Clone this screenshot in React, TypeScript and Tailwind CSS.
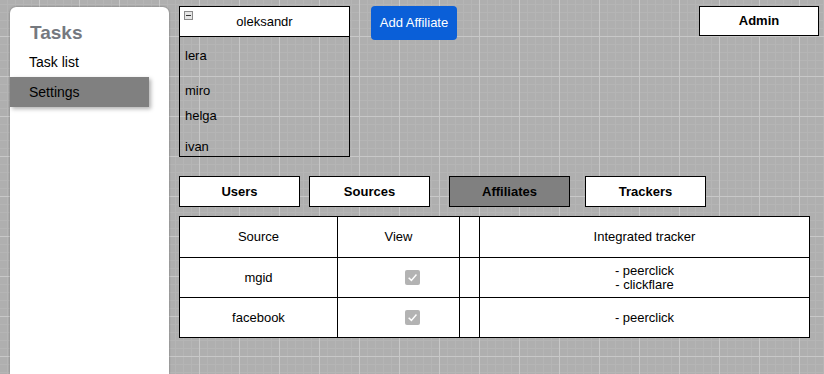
import React from 'react';

const users = [
  { name: 'lera', cls: 'h-[36px] pt-[11px]' },
  { name: 'miro', cls: 'h-[26px] pt-[10px]' },
  { name: 'helga', cls: 'h-[30px] pt-[9px]' },
  { name: 'ivan', cls: 'h-[26px] pt-[10px]' },
];

const tabs = [
  { label: 'Users', cls: 'ml-0', active: false },
  { label: 'Sources', cls: 'ml-[9px]', active: false },
  { label: 'Affiliates', cls: 'ml-[19px]', active: true },
  { label: 'Trackers', cls: 'ml-[15px]', active: false },
];

const rows = [
  { source: 'mgid', trackers: ['peerclick', 'clickflare'] },
  { source: 'facebook', trackers: ['peerclick'] },
];

const Check: React.FC = () => (
  <span className="inline-flex w-[15px] h-[15px] rounded-[2px] bg-[#b3b3b3] items-center justify-center">
    <svg width="11" height="11" viewBox="0 0 10 10">
      <path d="M1.5 5.2 L4 7.6 L8.6 2.2" stroke="#fff" strokeWidth="1.3" fill="none" />
    </svg>
  </span>
);

const App: React.FC = () => {
  return (
    <div
      className="w-full h-[374px] overflow-hidden flex bg-[#afafaf] bg-[linear-gradient(to_right,#c8c8c8_1px,transparent_1px),linear-gradient(to_bottom,#c8c8c8_1px,transparent_1px),linear-gradient(to_right,#b5b5b5_1px,transparent_1px),linear-gradient(to_bottom,#b5b5b5_1px,transparent_1px)] bg-[size:40px_40px,40px_40px,8px_8px,8px_8px] bg-[position:39px_36px,39px_36px,7px_4px,7px_4px] text-[13px] text-black"
      style={{ fontFamily: '"Liberation Sans", Arial, sans-serif' }}
    >
      {/* sidebar */}
      <div className="ml-[10px] mt-[7px] w-[159px] shrink-0 bg-white rounded-t-[6px] shadow-[0_0_2px_rgba(0,0,0,0.45)] pt-[15px]">
        <div className="pl-[20px] text-[19px] font-bold text-[#75797f] leading-[22px]">Tasks</div>
        <div className="pl-[19px] mt-[10px] text-[14px] leading-[16px]">Task list</div>
        <div className="mt-[7px] w-[139px] h-[30px] bg-[#808080] pl-[19px] flex items-center text-[14px] shadow-[2px_2px_4px_rgba(0,0,0,0.3)]">
          Settings
        </div>
      </div>

      {/* main */}
      <div className="flex-1 ml-[10px] mr-[5px] mt-[6px] flex flex-col">
        <div className="flex items-start">
          <div className="w-[171px] h-[151px] border border-black flex flex-col">
            <div className="h-[30px] bg-white border-b border-black relative flex items-center justify-center">
              <span className="absolute left-[4px] top-[4px] w-[9px] h-[9px] border border-[#8a8a8a] bg-[#e6e6e6] flex items-center justify-center">
                <span className="w-[5px] h-[1px] bg-[#333]" />
              </span>
              <span>oleksandr</span>
            </div>
            {users.map(u => (
              <div key={u.name} className={`pl-[5px] leading-[15px] ${u.cls}`}>{u.name}</div>
            ))}
          </div>
          <button className="ml-[21px] w-[86px] h-[34px] rounded-[4px] bg-[#0a5fd8] text-white text-[13px]">
            Add Affiliate
          </button>
          <div className="ml-auto w-[120px] h-[30px] border border-black bg-white flex items-center justify-center font-bold">
            Admin
          </div>
        </div>

        <div className="flex mt-[19px]">
          {tabs.map(t => (
            <div
              key={t.label}
              className={`${t.cls} w-[121px] h-[31px] border border-black flex items-center justify-center font-bold ${t.active ? 'bg-[#808080]' : 'bg-white'}`}
            >
              {t.label}
            </div>
          ))}
        </div>

        <table className="mt-[9px] w-[631px] bg-white border-collapse">
          <thead>
            <tr className="h-[41px]">
              <th className="w-[158px] border border-black font-normal">Source</th>
              <th className="w-[122px] border border-black font-normal">View</th>
              <th className="w-[20px] border border-black" />
              <th className="border border-black font-normal">Integrated tracker</th>
            </tr>
          </thead>
          <tbody>
            {rows.map(r => (
              <tr key={r.source} className="h-[40px]">
                <td className="border border-black text-center">{r.source}</td>
                <td className="border border-black pl-[67px] align-middle">
                  <div className="flex"><Check /></div>
                </td>
                <td className="border border-black" />
                <td className="border border-black text-center leading-[14px]">
                  {r.trackers.map(tr => (
                    <div key={tr}>- {tr}</div>
                  ))}
                </td>
              </tr>
            ))}
          </tbody>
        </table>
      </div>
    </div>
  );
};

export default App;
